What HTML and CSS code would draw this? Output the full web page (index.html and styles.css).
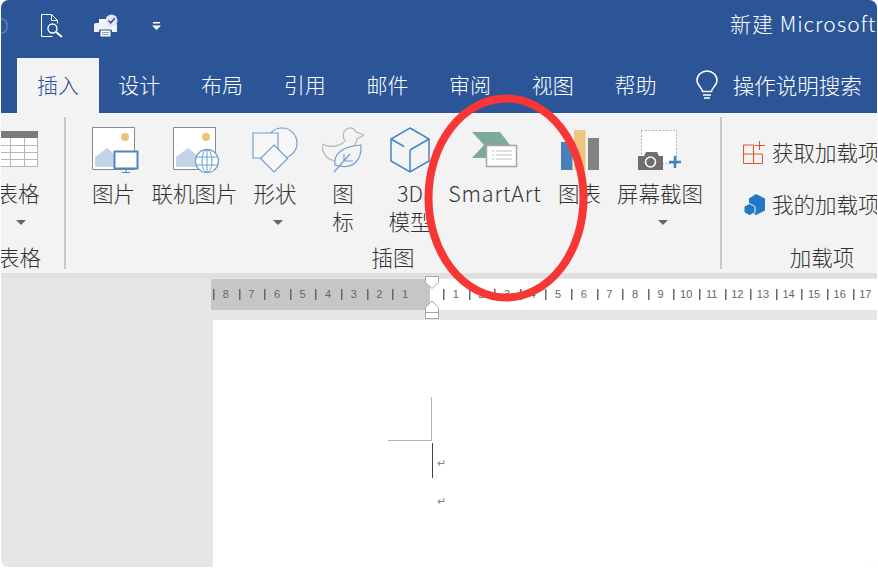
FILE: index.html

```html
<!DOCTYPE html>
<html lang="zh-CN">
<head>
    <meta charset="UTF-8">
    <title>新建 Microsoft Word</title>
    <link rel="stylesheet" href="styles.css">
</head>
<body>
<div class="window">

    <div class="titlebar">
        <div class="quick-tools">
            <svg class="qt-undo" width="7" height="16" viewBox="0 0 7 16" fill="none" stroke="#5f80b3" stroke-width="1.5">
                <path d="M0 1c4 0 6 3 6 7s-2 7-6 7"/>
            </svg>
            <svg class="qt-preview" width="24" height="24" viewBox="0 0 24 24" fill="none" stroke="#fff" stroke-width="1">
                <path d="M.5 .5h10l6 6v3M.5 .5v22h11"/>
                <path d="M10.5 .5v6h6"/>
                <circle cx="11.5" cy="14.5" r="4.5" stroke-width="1.4"/>
                <path d="M15 18l6 5" stroke-width="2"/>
            </svg>
            <svg class="qt-print" width="26" height="24" viewBox="0 0 26 24">
                <path d="M6 5h11v7H6z" fill="#fff"/>
                <path d="M1 11q0-2 2-2h19q2 0 2 2v7h-5v-2H6v2H1z" fill="#eef2f8"/>
                <path d="M7 16h11v7H7z" fill="#fff" stroke="#2b5597"/>
                <path d="M9 18.500h7M9 20.500h7" stroke="#8aa3c9"/>
                <circle cx="18.500" cy="6.500" r="6" fill="#dfe6f1"/>
                <path d="M15.500 6.500l2.300 2.300 4-4.500" fill="none" stroke="#2b5597" stroke-width="1.600"/>
            </svg>
            <svg class="qt-more" width="9" height="9" viewBox="0 0 9 9" fill="#fff">
                <path d="M1 0h7v1.500H1zM0 3.500h9L4.500 8z"/>
            </svg>
        </div>
        <div class="doc-title">新建 Microsoft</div>
    </div>

    <div class="tabbar">
        <div class="tab tab-active">插入</div>
        <div class="tab">设计</div>
        <div class="tab">布局</div>
        <div class="tab">引用</div>
        <div class="tab">邮件</div>
        <div class="tab">审阅</div>
        <div class="tab">视图</div>
        <div class="tab">帮助</div>
        <div class="tell-me">
            <svg width="26" height="30" viewBox="0 0 26 30" fill="none" stroke="#fff" stroke-width="1.600">
                <path d="M8.500 21.500c0-4-5.500-5.500-5.500-11a10 9.500 0 0 1 20 0c0 5.500-5.500 7-5.500 11z"/>
                <path d="M9 25h8M10 28h6"/>
            </svg>
            <span>操作说明搜索</span>
        </div>
    </div>

    <div class="ribbon">
        <div class="group group-table">
            <div class="tool tool-table">
                <div class="art">
                    <svg class="art-table" width="38" height="36" viewBox="0 0 38 36">
                        <path d="M0 0h38v36H0z" fill="#fff"/>
                        <path d="M0 0h38v7H0z" fill="#7b7b7b"/>
                        <path d="M0 14.500h38M0 21.500h38M0 28.500h38M10.500 7v29M24.500 7v29M37.500 7v29M0 35.500h38" stroke="#b5b5b5" fill="none"/>
                    </svg>
                </div>
                <div class="tool-label">表格</div>
                <div class="caret"></div>
            </div>
            <div class="group-name">表格</div>
        </div>

        <div class="group group-illust">
            <div class="tool tool-pic">
                <div class="art">
                    <svg class="art-shift" width="47" height="46" viewBox="0 0 47 46">
                        <path d="M.5 .5h42v42H.5z" fill="#fff" stroke="#8a8a8a"/>
                        <circle cx="33" cy="10" r="4" fill="#efc27a"/>
                        <path d="M3 40V30l12-9 10 8 8 3v8z" fill="#c3d4e8"/>
                        <path d="M22.500 24.500h23v17h-23z" fill="#fff" stroke="#4f86c0" stroke-width="2"/>
                        <path d="M34 42v3M30 45.500h8" stroke="#4f86c0"/>
                    </svg>
                </div>
                <div class="tool-label">图片</div>
            </div>
            <div class="tool tool-online">
                <div class="art">
                    <svg class="art-shift" width="47" height="46" viewBox="0 0 47 46">
                        <path d="M.5 .5h42v42H.5z" fill="#fff" stroke="#8a8a8a"/>
                        <circle cx="33" cy="10" r="4" fill="#efc27a"/>
                        <path d="M3 40V30l12-9 10 8 8 3v8z" fill="#c3d4e8"/>
                        <circle cx="34" cy="34" r="11.500" fill="#fff" stroke="#6d9ccd" stroke-width="1.300"/>
                        <ellipse cx="34" cy="34" rx="5" ry="11.500" fill="none" stroke="#6d9ccd"/>
                        <path d="M34 22.500v23M23 30h22M23 38h22" stroke="#6d9ccd" fill="none"/>
                    </svg>
                </div>
                <div class="tool-label">联机图片</div>
            </div>
            <div class="tool tool-shape">
                <div class="art">
                    <svg width="46" height="46" viewBox="0 0 46 46" stroke="#6f9fce" stroke-width="1.200" fill="#f7f7f7">
                        <circle cx="30" cy="16" r="15"/>
                        <path d="M1 6h25v25H1z"/>
                        <path d="M22 18l13.500 13.500L22 45 8.500 31.500z"/>
                    </svg>
                </div>
                <div class="tool-label">形状</div>
                <div class="caret"></div>
            </div>
            <div class="tool tool-icon">
                <div class="art">
                    <svg width="42" height="46" viewBox="0 0 42 46" fill="none" stroke-width="1.200">
                        <path d="M24 15c-4-4-4-12 3-14 4-1 6 2 7 4l8 3-7 4c-1 3-1 5-3 7" stroke="#b5b5b5"/>
                        <path d="M0 17c6 3 14 4 22-2M0 17c0 9 4 15 13 17" stroke="#b5b5b5"/>
                        <path d="M13 38c-2-11 8-19 26-20 1 14-7 26-26 20z" fill="#f3f3f3" stroke="#6f9fce"/>
                        <path d="M12 45l16-18M22 34v-7M22 34h9" stroke="#6f9fce"/>
                    </svg>
                </div>
                <div class="tool-label">图<br>标</div>
            </div>
            <div class="tool tool-3d">
                <div class="art">
                    <svg width="40" height="46" viewBox="0 0 40 46" fill="none" stroke="#3f87c9" stroke-width="1.500">
                        <path d="M20 1l19 11v22L20 45 1 34V12z"/>
                        <path d="M20 23l19-11M20 23v22M1 12l13 7.500"/>
                    </svg>
                </div>
                <div class="tool-label">3D<br>模型</div>
            </div>
            <div class="tool tool-smart">
                <div class="art">
                    <svg width="46" height="36" viewBox="0 0 46 36">
                        <path d="M0 0h28l10 13-10 13H0l12-13z" fill="#7dab9b"/>
                        <path d="M14.500 13.500h30v21h-30z" fill="#fff" stroke="#a5a5a5" stroke-width="1.500"/>
                        <path d="M20 19h2M20 23h2M20 27h2M24 19h16M24 23h16M24 27h16" stroke="#c0c0c0"/>
                    </svg>
                </div>
                <div class="tool-label">SmartArt</div>
            </div>
            <div class="tool tool-graph">
                <div class="art">
                    <svg width="38" height="40" viewBox="0 0 38 40">
                        <path d="M0 12h11.500v28H0z" fill="#4a80b8"/>
                        <path d="M13 0h11.500v40H13z" fill="#edc77f"/>
                        <path d="M27 8h11v32H27z" fill="#828282"/>
                    </svg>
                </div>
                <div class="tool-label">图表</div>
            </div>
            <div class="tool tool-shot">
                <div class="art">
                    <svg width="44" height="42" viewBox="0 0 44 42">
                        <path d="M3.500 1.500h35v33h-35z" fill="#fff" stroke="#b3b3b3" stroke-dasharray="2 1.500"/>
                        <path d="M0 41V27h6l2-4h11l2 4h4v14z" fill="#6e6e6e"/>
                        <circle cx="12.500" cy="33" r="5" fill="#6e6e6e" stroke="#fff" stroke-width="1.600"/>
                        <path d="M37 27v12M31 33h12" stroke="#3f7fbf" stroke-width="2.400"/>
                    </svg>
                </div>
                <div class="tool-label">屏幕截图</div>
                <div class="caret"></div>
            </div>
            <div class="group-name">插图</div>
        </div>

        <div class="group group-addins">
            <div class="addin">
                <svg width="23" height="23" viewBox="0 0 23 23" fill="none" stroke="#dc5a2c" stroke-width="1.100">
                    <path d="M.5 4h10M.5 13h19M.5 22.500h19M.5 4v18.500M10.500 4v18.500M19.500 13v9.500"/>
                    <path d="M16.500 0v9M12 4.500h10"/>
                </svg>
                <span>获取加载项</span>
            </div>
            <div class="addin">
                <svg width="23" height="23" viewBox="0 0 23 23">
                    <path d="M13 1l9 4.500v12L13 22l-7-3.500V5.500z" fill="#1e7ac4"/>
                    <path d="M6.500 10.500l5.500 3v6l-5.500 3-5.500-3v-6z" fill="#1e7ac4" stroke="#f3f3f3"/>
                </svg>
                <span>我的加载项</span>
            </div>
            <div class="group-name">加载项</div>
        </div>
    </div>

    <div class="workspace">
        <div class="ruler">
            <div class="ruler-off">
                <span>8</span><span>7</span><span>6</span><span>5</span><span>4</span><span>3</span><span>2</span><span>1</span>
            </div>
            <div class="ruler-on">
                <span>1</span><span>2</span><span>3</span><span>4</span><span>5</span><span>6</span><span>7</span><span>8</span><span>9</span><span>10</span><span>11</span><span>12</span><span>13</span><span>14</span><span>15</span><span>16</span><span>17</span>
            </div>
        </div>
        <svg class="indent-marks" width="14" height="43" viewBox="0 0 14 43" fill="#fff" stroke="#a6a6a6">
            <path d="M.5 .5h13v6L7 12.500 .5 6.500z"/>
            <path d="M7 25l6.500 6.500v11H.5v-11zM.5 36.500h13"/>
        </svg>
        <div class="page">
            <div class="margin-mark"></div>
            <div class="para para-first"><span class="caret-line"></span><span class="pilcrow">↵</span></div>
            <div class="para"><span class="pilcrow">↵</span></div>
        </div>
    </div>

    <svg class="annotation" width="170" height="212" viewBox="0 0 170 212" fill="none">
        <ellipse cx="85" cy="106" rx="77.500" ry="99.500" stroke="#f83636" stroke-width="8"/>
    </svg>
</div>
</body>
</html>
```

FILE: styles.css

```css
/* Page */
* {
    margin: 0;
    padding: 0;
    box-sizing: border-box;
}

body {
    background-color: #fff;
    font-family: "Noto Sans CJK SC", "Liberation Sans", sans-serif;
    font-weight: 300;
    color: #333;
    width: 878px;
    height: 569px;
    overflow: hidden;
}

.window {
    position: relative;
    width: 876px;
    height: 567px;
    margin-left: 1px;
    border-radius: 8px;
    overflow: hidden;
    background-color: #e6e6e6;
}

/* Title bar */
.titlebar {
    height: 58px;
    background-color: #2b5597;
    display: flex;
    align-items: flex-start;
    color: #fff;
}

.quick-tools {
    display: flex;
    align-items: center;
    height: 26px;
    margin-top: 13px;
}

.qt-preview {
    margin-left: 33px;
}

.qt-print {
    margin-left: 28px;
}

.qt-more {
    margin-left: 33px;
}

.doc-title {
    margin-left: auto;
    margin-top: 8px;
    width: 147px;
    font-size: 21px;
    letter-spacing: 1px;
    line-height: 30px;
    white-space: nowrap;
    overflow: hidden;
}

/* Tabs */
.tabbar {
    height: 55px;
    background-color: #2b5597;
    display: flex;
    padding-left: 16px;
    color: #fff;
    font-size: 21px;
}

.tab {
    width: 82.7px;
    text-align: center;
    line-height: 52px;
}

.tab-active {
    width: 82px;
    margin-right: -1px;
    background-color: #f3f3f3;
    color: #2b5597;
}

.tell-me {
    display: flex;
    align-items: center;
    margin-left: 17px;
    gap: 13px;
    font-size: 21.5px;
    line-height: 28px;
    padding-bottom: 2px;
}

/* Ribbon */
.ribbon {
    height: 165px;
    background-color: #f3f3f3;
    border-bottom: 5px solid #e0e0e0;
    display: flex;
    font-size: 21.5px;
    line-height: 28px;
}

.group {
    position: relative;
    display: flex;
    flex-shrink: 0;
    height: 152px;
    margin-top: 4px;
    padding-top: 10px;
}

.group-table {
    width: 65px;
    border-right: 2px solid #c8c8c8;
}

.group-illust {
    width: 656px;
    padding-left: 8px;
    border-right: 2px solid #c8c8c8;
}

.group-addins {
    flex-direction: column;
    width: 200px;
    padding: 9px 0 0 21px;
    white-space: nowrap;
}

.group-name {
    position: absolute;
    left: 0;
    right: 0;
    top: 126px;
    text-align: center;
    line-height: 28px;
    white-space: nowrap;
}

.group-table .group-name {
    left: -3px;
    right: auto;
    width: 40px;
}

/* Big ribbon buttons */
.tool {
    display: flex;
    flex-direction: column;
    align-items: center;
    text-align: center;
    white-space: nowrap;
    flex-shrink: 0;
}

.art {
    display: flex;
    align-items: center;
    height: 46px;
    margin-bottom: 6px;
}

.art svg {
    display: block;
}

.art-shift {
    margin-left: 3px;
}

.art-table {
    margin-left: 2px;
    margin-top: -2px;
}

.caret {
    width: 0;
    height: 0;
    margin-top: 13px;
    margin-left: 5px;
    border-left: 5px solid transparent;
    border-right: 5px solid transparent;
    border-top: 5px solid #666;
}

.tool-table {
    width: 40px;
    margin-left: -3px;
}

.tool-pic { width: 79px; }
.tool-online { width: 83px; }
.tool-shape { width: 78px; }
.tool-icon { width: 58px; }
.tool-3d { width: 76px; }
.tool-smart { width: 94px; letter-spacing: .8px; }
.tool-graph { width: 75px; }
.tool-shot { width: 86px; }

/* Small add-in buttons */
.addin {
    display: flex;
    align-items: center;
    gap: 6px;
    height: 52px;
}

.addin svg {
    flex-shrink: 0;
}

/* Document area */
.workspace {
    position: relative;
    height: 289px;
    background-color: #e6e6e6;
    padding: 1px 0 0 210px;
}

.ruler {
    display: flex;
    height: 31px;
    font-family: "Liberation Sans", sans-serif;
    font-weight: 400;
    font-size: 11px;
    line-height: 31px;
    color: #666;
}

.ruler span {
    flex-shrink: 0;
    width: 25.6px;
    text-align: center;
    background: linear-gradient(#666, #666) left center / 1.5px 11px no-repeat;
}

.ruler-off {
    display: flex;
    width: 219px;
    padding-left: 2px;
    background-color: #c6c6c6;
}

.ruler-on {
    display: flex;
    flex: 1;
    padding-left: 13px;
    background-color: #fff;
    overflow: hidden;
}

.indent-marks {
    position: absolute;
    left: 424px;
    top: -2px;
}

.page {
    position: relative;
    margin-top: 10px;
    margin-left: 2px;
    height: 260px;
    background-color: #fff;
    padding: 123px 0 0 219px;
}

.margin-mark {
    position: absolute;
    left: 175px;
    top: 77px;
    width: 44px;
    height: 44px;
    border-right: 1px solid #b4b4b4;
    border-bottom: 1px solid #b4b4b4;
}

.para {
    display: flex;
    align-items: center;
    height: 35px;
    margin-top: 3px;
}

.para-first {
    margin-top: 0;
}

.caret-line {
    width: 1px;
    height: 35px;
    background-color: #444;
}

.pilcrow {
    font-family: "DejaVu Sans", sans-serif;
    font-size: 11px;
    color: #888;
    margin-top: 5px;
    margin-left: 4px;
}

.para:not(.para-first) .pilcrow {
    margin-left: 5px;
}

/* Red ellipse marked on top of the screenshot */
.annotation {
    position: absolute;
    left: 420px;
    top: 92px;
}
```
